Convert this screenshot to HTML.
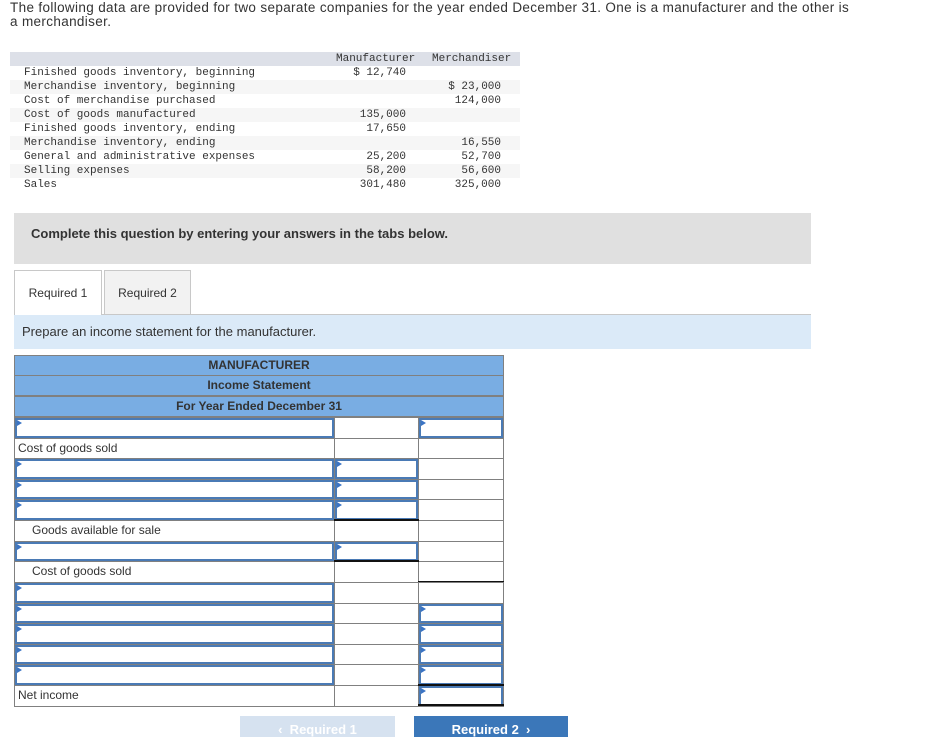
<!DOCTYPE html>
<html><head><meta charset="utf-8"><style>
body{margin:0;width:933px;height:751px;background:#fff;position:relative;overflow:hidden;font-family:"Liberation Sans",Arial,sans-serif;color:#333}
.a{position:absolute}
.mono{font-family:"Liberation Mono",monospace;font-size:11px;color:#333;line-height:14px}
.c{position:absolute;border:1px solid #808080;box-sizing:border-box;background:#fff}
.in{position:absolute;border:2px solid #4a7ab5;box-sizing:border-box;background:#fff}
.in:before{content:"";position:absolute;left:0;top:0;border-left:5px solid #3b74c4;border-top:3px solid transparent;border-bottom:3px solid transparent}
.lbl{position:absolute;font-size:12px;color:#333;line-height:20px}
.hd{position:absolute;left:14px;width:490px;height:21px;background:#79ade3;border:1px solid #808080;box-sizing:border-box;text-align:center;font-weight:bold;font-size:12px;line-height:19px;color:#333}
</style></head><body>
<div class="a" style="left:10px;top:1px;font-size:13.5px;line-height:14px;width:920px;letter-spacing:0.35px;white-space:nowrap">The following data are provided for two separate companies for the year ended December 31. One is a manufacturer and the other is<br>a merchandiser.</div>

<div class="a" style="left:10px;top:52px;width:510px;height:14px;background:#dde0e8"></div>
<div class="a" style="left:10px;top:80px;width:510px;height:14px;background:#f6f6f6"></div>
<div class="a" style="left:10px;top:108px;width:510px;height:14px;background:#f6f6f6"></div>
<div class="a" style="left:10px;top:136px;width:510px;height:14px;background:#f6f6f6"></div>
<div class="a" style="left:10px;top:164px;width:510px;height:14px;background:#f6f6f6"></div>
<div class="a mono" style="left:24px;top:66px">Finished goods inventory, beginning<br>Merchandise inventory, beginning<br>Cost of merchandise purchased<br>Cost of goods manufactured<br>Finished goods inventory, ending<br>Merchandise inventory, ending<br>General and administrative expenses<br>Selling expenses<br>Sales</div>
<div class="a mono" style="left:336px;top:52px">Manufacturer</div>
<div class="a mono" style="left:432px;top:52px">Merchandiser</div>
<div class="a mono" style="left:306px;width:100px;top:66px;text-align:right">$ 12,740<br><br><br>135,000<br>17,650<br><br>25,200<br>58,200<br>301,480</div>
<div class="a mono" style="left:401px;width:100px;top:66px;text-align:right"><br>$ 23,000<br>124,000<br><br><br>16,550<br>52,700<br>56,600<br>325,000</div>

<div class="a" style="left:14px;top:213px;width:797px;height:51px;background:#e0e0e0"></div>
<div class="a" style="left:31px;top:226px;font-size:13px;font-weight:bold;color:#333">Complete this question by entering your answers in the tabs below.</div>

<div class="a" style="left:14px;top:314px;width:797px;height:1px;background:#c8c8c8"></div>
<div class="a" style="left:14px;top:270px;width:88px;height:45px;border:1px solid #c8c8c8;border-bottom:none;box-sizing:border-box;background:#fff;font-size:12px;text-align:center;line-height:44px">Required 1</div>
<div class="a" style="left:104px;top:270px;width:87px;height:44px;border:1px solid #c8c8c8;border-bottom:none;box-sizing:border-box;background:#f2f2f2;font-size:12px;text-align:center;line-height:44px">Required 2</div>
<div class="a" style="left:14px;top:315px;width:797px;height:34px;background:#dbeaf8"></div>
<div class="a" style="left:22px;top:324px;font-size:13px">Prepare an income statement for the manufacturer.</div>

<div class="hd" style="top:355px">MANUFACTURER</div>
<div class="hd" style="top:375px">Income Statement</div>
<div class="hd" style="top:396px">For Year Ended December 31</div>

<div id="t"></div>
<script>
var tops=[417,438,458,479,499,520,541,561,582,603,623,644,664,685,706];
var cols=[[14,335],[334,419],[418,504]];
var spec=[['i','c','i'],['c','c','c'],['i','i','c'],['i','i','c'],['i','i','c'],['c','c','c'],['i','i','c'],['c','c','c'],['i','c','c'],['i','c','i'],['i','c','i'],['i','c','i'],['i','c','i'],['c','c','i']];
var labels={1:['Cost of goods sold',4],5:['Goods available for sale',18],7:['Cost of goods sold',18],13:['Net income',4]};
var h='';
for(var r=0;r<14;r++){var y=tops[r],hh=tops[r+1]-y+1;
 for(var k=0;k<3;k++){var x=cols[k][0],w=cols[k][1]-x;
  h+='<div class="c" style="left:'+x+'px;top:'+y+'px;width:'+w+'px;height:'+hh+'px"></div>';
  if(spec[r][k]=='i')h+='<div class="in" style="left:'+(x+1)+'px;top:'+(y+1)+'px;width:'+(w-2)+'px;height:'+(hh-2)+'px"></div>';
 }
 if(labels[r])h+='<div class="lbl" style="left:'+(14+labels[r][1])+'px;top:'+y+'px">'+labels[r][0]+'</div>';
}
h+='<div class="a" style="left:334px;top:519px;width:85px;height:2px;background:#111"></div>';
h+='<div class="a" style="left:334px;top:560px;width:85px;height:2px;background:#111"></div>';
h+='<div class="a" style="left:418px;top:581px;width:86px;height:1px;background:#111"></div>';
h+='<div class="a" style="left:418px;top:684px;width:86px;height:2px;background:#111"></div>';
h+='<div class="a" style="left:418px;top:704px;width:86px;height:2px;background:#111"></div>';
document.getElementById('t').innerHTML=h;
</script>

<div class="a" style="left:240px;top:716px;width:155px;height:21px;background:#d6e2f0;color:#fff;font-weight:bold;font-size:13px;text-align:center;line-height:28px">&lsaquo;&nbsp;&nbsp;Required 1</div>
<div class="a" style="left:414px;top:716px;width:154px;height:21px;background:#3b77b9;color:#fff;font-weight:bold;font-size:13px;text-align:center;line-height:28px">Required 2&nbsp;&nbsp;&rsaquo;</div>
</body></html>
